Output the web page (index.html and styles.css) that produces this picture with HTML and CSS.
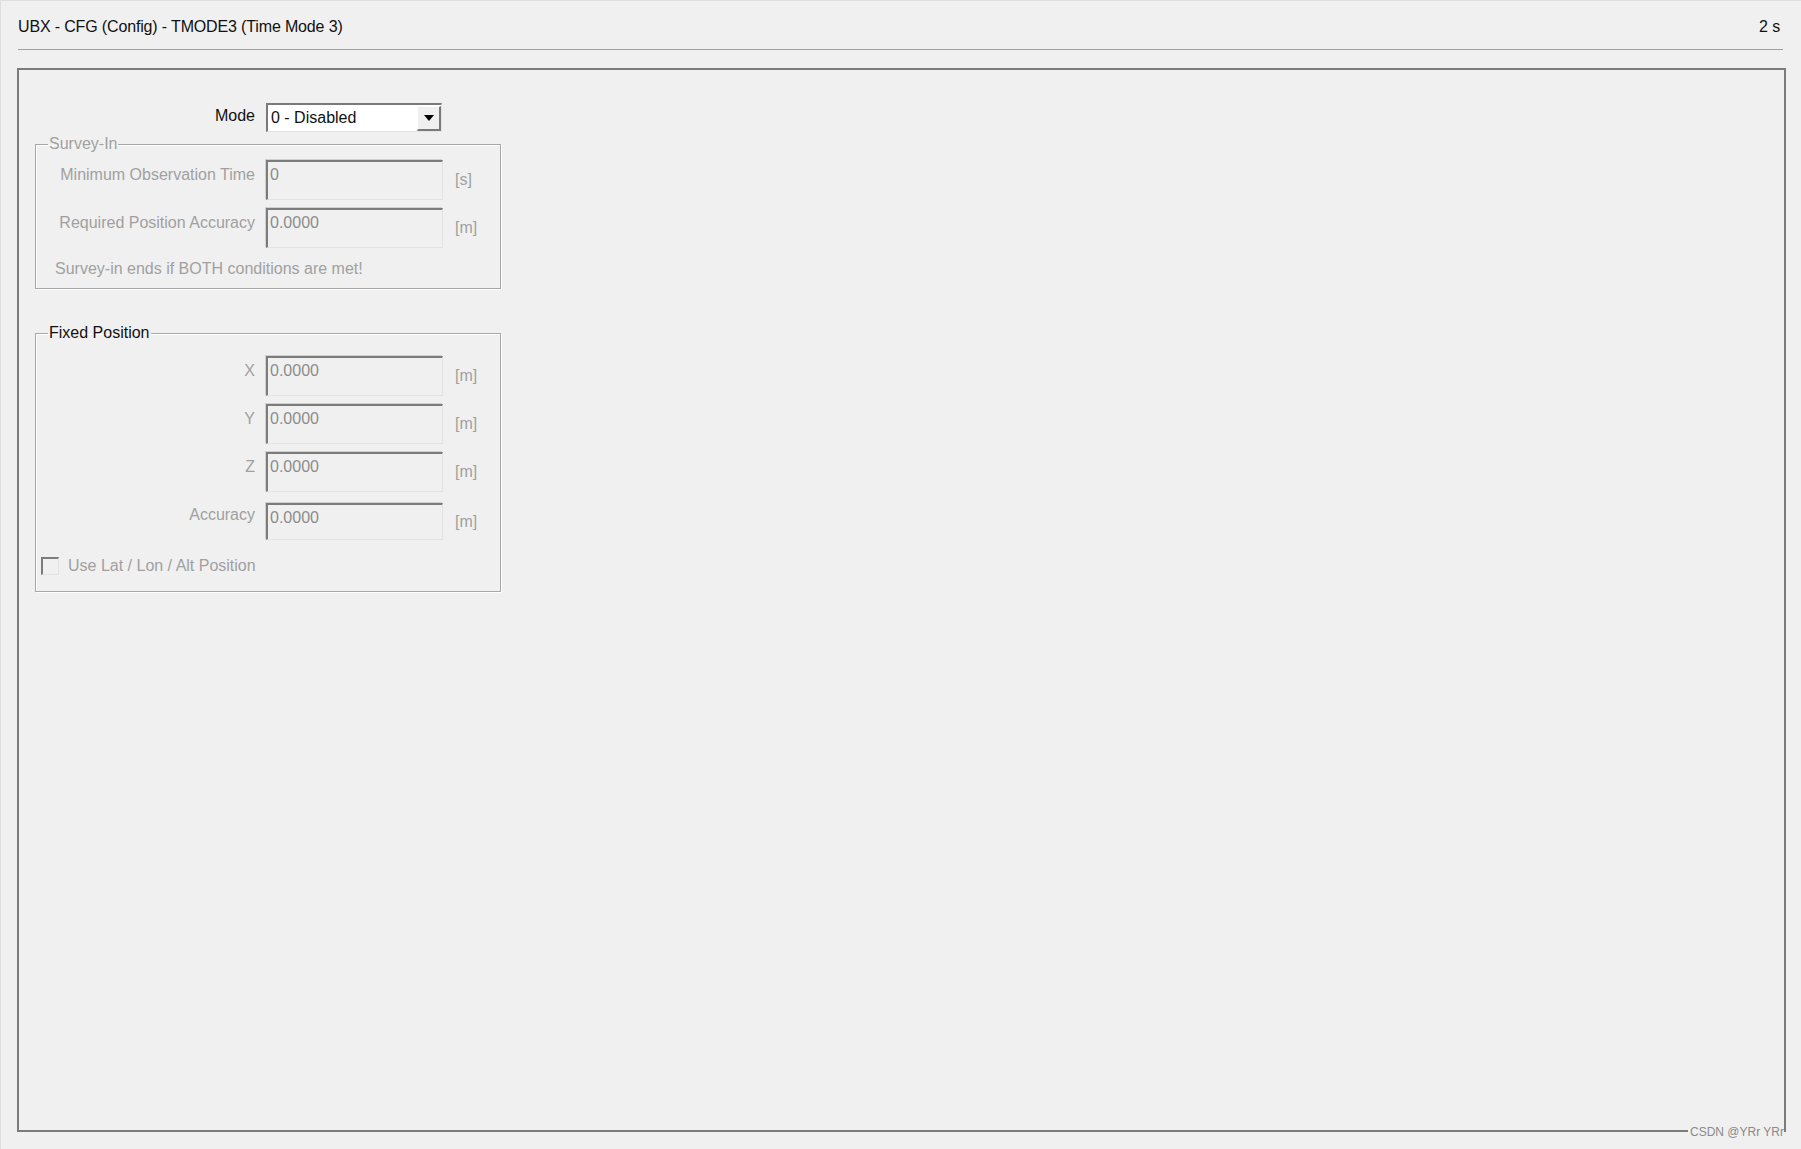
FILE: index.html
```html
<!DOCTYPE html>
<html lang="en">
<head>
    <meta charset="UTF-8">
    <title>UBX - CFG (Config) - TMODE3</title>
    <link rel="stylesheet" href="styles.css">
</head>
<body>
    <div class="page">
        <div class="header">
            <span class="title">UBX - CFG (Config) - TMODE3 (Time Mode 3)</span>
            <span class="rate">2 s</span>
        </div>

        <div class="frame">
            <div class="mode-row">
                <label class="mode-label">Mode</label>
                <div class="combo">
                    <span class="combo-value">0 - Disabled</span>
                    <span class="combo-btn"><span class="arrow"></span></span>
                </div>
            </div>

            <fieldset class="group survey">
                <legend class="disabled">Survey-In</legend>
                <div class="field-row">
                    <span class="field-label">Minimum Observation Time</span>
                    <div class="edit">0</div>
                    <span class="unit">[s]</span>
                </div>
                <div class="field-row">
                    <span class="field-label">Required Position Accuracy</span>
                    <div class="edit">0.0000</div>
                    <span class="unit">[m]</span>
                </div>
                <div class="note">Survey-in ends if BOTH conditions are met!</div>
            </fieldset>

            <fieldset class="group fixed">
                <legend>Fixed Position</legend>
                <div class="field-row">
                    <span class="field-label">X</span>
                    <div class="edit">0.0000</div>
                    <span class="unit">[m]</span>
                </div>
                <div class="field-row">
                    <span class="field-label">Y</span>
                    <div class="edit">0.0000</div>
                    <span class="unit">[m]</span>
                </div>
                <div class="field-row">
                    <span class="field-label">Z</span>
                    <div class="edit">0.0000</div>
                    <span class="unit">[m]</span>
                </div>
                <div class="field-row last">
                    <span class="field-label">Accuracy</span>
                    <div class="edit">0.0000</div>
                    <span class="unit">[m]</span>
                </div>
                <div class="check-row">
                    <span class="checkbox"></span>
                    <span class="check-label">Use Lat / Lon / Alt Position</span>
                </div>
            </fieldset>

            <span class="watermark">CSDN @YRr YRr</span>
        </div>
    </div>
</body>
</html>
```

FILE: styles.css
```css
html, body {
    height: 100%;
}

body {
    margin: 0;
    background-color: #f0f0f0;
    color: #111;
    font-family: 'Liberation Sans', Arial, sans-serif;
    font-size: 16px;
    line-height: 18px;
}

.page {
    box-sizing: border-box;
    height: 100%;
    display: flex;
    flex-direction: column;
    padding: 0 15px 17px 17px;
    border-top: 1px solid #dedede;
    border-left: 1px solid #dedede;
}

.header {
    height: 49px;
    display: flex;
    justify-content: space-between;
    align-items: center;
    padding: 4px 3px 0 0;
    box-sizing: border-box;
    border-bottom: 1px solid #a0a0a0;
    margin-right: 3px;
    letter-spacing: -0.15px;
}

.frame {
    position: relative;
    flex: 1;
    margin-top: 18px;
    margin-left: -1px;
    border: 2px solid #7c7c7c;
    padding: 33px 0 0 16px;
}

/* mode selector */
.mode-row {
    display: flex;
    align-items: flex-start;
}

.mode-label {
    width: 220px;
    text-align: right;
    padding-top: 4px;
}

.combo {
    box-sizing: border-box;
    width: 176px;
    height: 29px;
    margin-left: 11px;
    display: flex;
    align-items: center;
    justify-content: space-between;
    background: #fff;
    border-style: solid;
    border-width: 2px 1px 1px 2px;
    border-color: #7a7a7a #e3e3e3 #e3e3e3 #7a7a7a;
    padding-left: 3px;
}

.combo-btn {
    box-sizing: border-box;
    width: 24px;
    height: 25px;
    display: flex;
    align-items: center;
    justify-content: center;
    background: #f0f0f0;
    border-style: solid;
    border-width: 1px 2px 2px 1px;
    border-color: #fff #7a7a7a #7a7a7a #fff;
}

.arrow {
    width: 0;
    height: 0;
    border-left: 5px solid transparent;
    border-right: 5px solid transparent;
    border-top: 6px solid #000;
}

/* group boxes */
.group {
    box-sizing: border-box;
    width: 466px;
    margin: 3px 0 0 0;
    padding: 7px 0 10px 0;
    min-width: 0;
    border: 1px solid #a8a8a8;
    box-shadow: inset 1px 1px 0 #fff, 1px 1px 0 #fff;
}

.group legend {
    margin-left: 12px;
    padding: 0 1px;
    line-height: 18px;
}

.fixed {
    margin-top: 35px;
    padding: 14px 0 16px 0;
}

.disabled,
.field-label,
.unit,
.note,
.check-label {
    color: #a0a0a0;
}

.field-row {
    display: flex;
    align-items: flex-start;
    margin-bottom: 8px;
}

.field-label {
    width: 219px;
    text-align: right;
    padding-top: 6px;
    white-space: nowrap;
}

.edit {
    box-sizing: border-box;
    width: 177px;
    height: 40px;
    margin-left: 11px;
    padding: 4px 0 0 2px;
    background: #f0f0f0;
    color: #8c8c8c;
    border-style: solid;
    border-width: 2px 1px 1px 2px;
    border-color: #7c7c7c #e3e3e3 #e3e3e3 #7c7c7c;
    box-shadow: -1px -1px 0 #d0d0d0;
}

.unit {
    align-self: center;
    margin-left: 12px;
}

.note {
    margin: 12px 0 0 19px;
}

.survey .field-row:last-of-type {
    margin-bottom: 0;
}

.fixed .last {
    margin-top: 11px;
    margin-bottom: 0;
}

.fixed .last .edit {
    height: 37px;
}

.fixed .last .field-label {
    padding-top: 3px;
}

.check-row {
    display: flex;
    align-items: center;
    margin: 17px 0 0 5px;
}

.checkbox {
    box-sizing: border-box;
    width: 18px;
    height: 18px;
    background: #f0f0f0;
    border-style: solid;
    border-width: 2px 1px 1px 2px;
    border-color: #7c7c7c #e3e3e3 #e3e3e3 #7c7c7c;
}

.check-label {
    margin-left: 9px;
}

.watermark {
    position: absolute;
    right: 0;
    bottom: -9px;
    font-size: 12px;
    line-height: 14px;
    color: #8a8a8a;
    background: #f0f0f0;
    padding-left: 2px;
}
```
